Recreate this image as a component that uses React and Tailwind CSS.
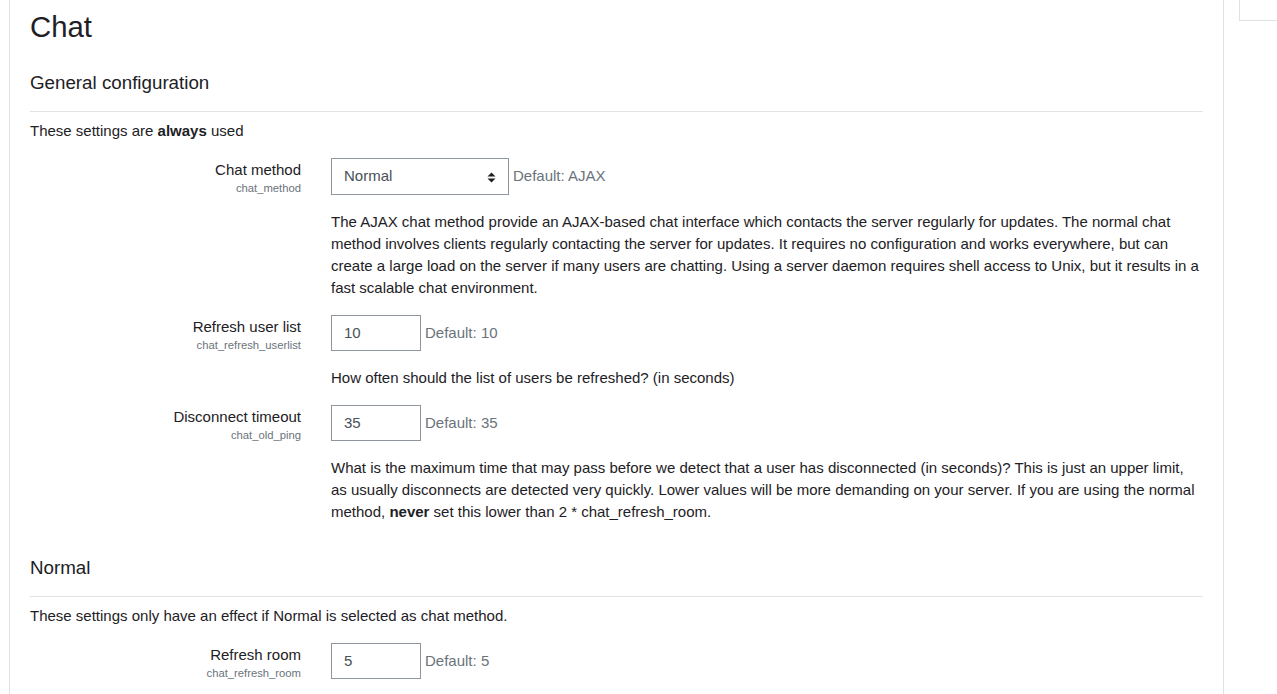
import React from "react";

const font = { fontFamily: '"Liberation Sans", Arial, sans-serif' };

function Label({ title, name }) {
  return (
    <div className="text-right pt-[1px]">
      <div className="text-[15px] leading-[22px] text-[#1d2125]">{title}</div>
      <div className="text-[11.25px] leading-[15px] text-[#6a737b]">{name}</div>
    </div>
  );
}

function TextInput({ value }) {
  return (
    <div className="w-[90px] h-[36px] border border-[#8f959e] bg-white flex items-center pl-[12px] text-[15px] text-[#495057]">
      {value}
    </div>
  );
}

function SelectBox({ value }) {
  return (
    <div className="w-[178px] h-[37px] border border-[#8f959e] bg-white flex items-center justify-between pl-[12px] pr-[12px] text-[15px] text-[#495057]">
      <span>{value}</span>
      <svg width="9" height="11" viewBox="0 0 9 11" className="mt-[1px]">
        <path d="M4.5 0.5 L8.5 4.5 L0.5 4.5 Z" fill="#1d2125" />
        <path d="M4.5 10.5 L8.5 6.5 L0.5 6.5 Z" fill="#1d2125" />
      </svg>
    </div>
  );
}

function Setting({ title, name, control, def, children }) {
  return (
    <div className="mt-[16px]">
      <div className="grid grid-cols-[271px_1fr] gap-x-[30px]">
        <Label title={title} name={name} />
        <div>
          <div className="flex items-center">
            {control}
            <span className="ml-[4px] text-[15px] text-[#6a737b]">Default: {def}</span>
          </div>
          <div className="mt-[16px] text-[15px] leading-[22px] text-[#1d2125]">{children}</div>
        </div>
      </div>
    </div>
  );
}

function SectionHeading({ children, className }) {
  return (
    <>
      <h3 className={`text-[18.75px] leading-[23px] text-[#1d2125] ${className}`}>{children}</h3>
      <div className="mt-[17px] border-t border-[#e3e3e3]" />
    </>
  );
}

export default function App() {
  return (
    <div className="flex bg-white min-h-[694px] h-[694px] overflow-hidden pl-[9px]" style={font}>
      <div className="w-[1215px] shrink-0 border-l border-r border-[#dee2e6] px-[20px]">
        <h2 className="mt-[9px] text-[29.3px] leading-[36px] text-[#1d2125]">Chat</h2>

        <SectionHeading className="mt-[26px]">General configuration</SectionHeading>
        <p className="mt-[8px] text-[15px] leading-[22px] text-[#1d2125]">
          These settings are <b>always</b> used
        </p>

        <Setting title="Chat method" name="chat_method" control={<SelectBox value="Normal" />} def="AJAX">
          The AJAX chat method provide an AJAX-based chat interface which contacts the server regularly for updates. The normal chat method involves clients regularly contacting the server for updates. It requires no configuration and works everywhere, but can create a large load on the server if many users are chatting. Using a server daemon requires shell access to Unix, but it results in a fast scalable chat environment.
        </Setting>

        <Setting title="Refresh user list" name="chat_refresh_userlist" control={<TextInput value="10" />} def="10">
          How often should the list of users be refreshed? (in seconds)
        </Setting>

        <Setting title="Disconnect timeout" name="chat_old_ping" control={<TextInput value="35" />} def="35">
          What is the maximum time that may pass before we detect that a user has disconnected (in seconds)? This is just an upper limit, as usually disconnects are detected very quickly. Lower values will be more demanding on your server. If you are using the normal method, <b>never</b> set this lower than 2 * chat_refresh_room.
        </Setting>

        <SectionHeading className="mt-[33px]">Normal</SectionHeading>
        <p className="mt-[8px] text-[15px] leading-[22px] text-[#1d2125]">
          These settings only have an effect if Normal is selected as chat method.
        </p>

        <Setting title="Refresh room" name="chat_refresh_room" control={<TextInput value="5" />} def="5">
          How often should the chat room be refreshed? (in seconds)
        </Setting>
      </div>
      <div className="ml-[15px] w-[60px] shrink-0">
        <div className="h-[21px] border-l border-b border-[#dee2e6]" />
      </div>
    </div>
  );
}
